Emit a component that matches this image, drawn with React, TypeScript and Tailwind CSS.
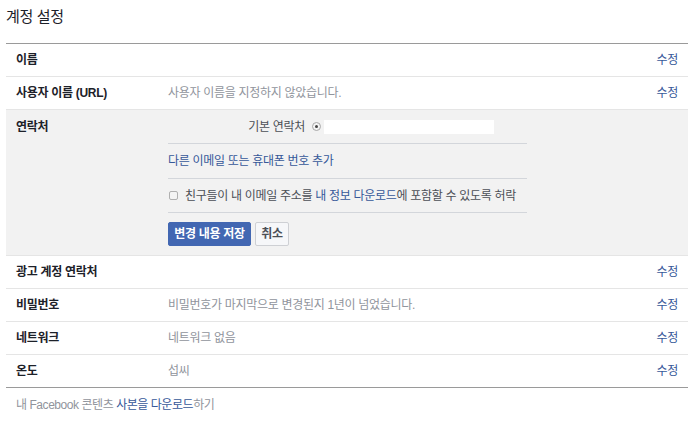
const font = "font-['Liberation_Sans','Noto_Sans_CJK_KR',sans-serif]";

type Row = { label: string; value?: string };

function SettingRow({ label, value }: Row) {
  return (
    <div className="flex h-[33px] items-center border-b border-[#e5e5e5] pl-[10px] pr-[10px]">
      <div className="w-[152px] font-bold text-[#1d2129]">{label}</div>
      <div className="flex-1 text-[#90949c]">{value}</div>
      <a className="text-[#365899]">수정</a>
    </div>
  );
}

function ContactEditor() {
  return (
    <div className="flex border-b border-[#e5e5e5] bg-[#f2f2f2] pl-[10px]">
      <div className="flex h-[34px] w-[152px] items-center font-bold text-[#1d2129]">연락처</div>
      <div className="w-[359px]">
        <div className="flex h-[34px] items-center border-b border-[#d3d6db]">
          <span className="w-[137px] text-right text-[#4b4f56]">기본 연락처</span>
          <span className="ml-[7px] flex h-[9px] w-[9px] items-center justify-center rounded-full border border-[#a8a8a8] bg-[#f4f4f4]">
            <span className="h-[3px] w-[3px] rounded-full bg-[#444]" />
          </span>
          <span className="ml-[3px] h-[14px] w-[170px] bg-white" />
        </div>
        <div className="flex h-[35px] items-center border-b border-[#d3d6db]">
          <a className="text-[#365899]">다른 이메일 또는 휴대폰 번호 추가</a>
        </div>
        <div className="flex h-[34px] items-center border-b border-[#d3d6db]">
          <span className="ml-[1px] h-[9px] w-[9px] rounded-[2px] border border-[#b0b0b0] bg-[#f4f4f4]" />
          <span className="ml-[7px] text-[#4b4f56]">
            친구들이 내 이메일 주소를 <a className="text-[#365899]">내 정보 다운로드</a>에 포함할 수 있도록 허락
          </span>
        </div>
        <div className="flex gap-[4px] pb-[9px] pt-[9px]">
          <button className="h-[24px] w-[83px] rounded-[2px] border border-[#4267b2] bg-[#4267b2] font-bold text-white">
            변경 내용 저장
          </button>
          <button className="h-[24px] w-[34px] rounded-[2px] border border-[#ced0d4] bg-[#f6f7f9] font-bold text-[#4b4f56]">
            취소
          </button>
        </div>
      </div>
    </div>
  );
}

export default function App() {
  return (
    <div className={`${font} h-[424px] w-[700px] bg-white px-[6px] text-[12px] tracking-[-0.3px]`}>
      <h1 className="h-[43px] pt-[7px] text-[15px] leading-[20px] text-[#1d2129]">계정 설정</h1>
      <div className="w-[682px] border-t border-[#9a9a9a]">
        <SettingRow label="이름" />
        <SettingRow label="사용자 이름 (URL)" value="사용자 이름을 지정하지 않았습니다." />
        <ContactEditor />
        <SettingRow label="광고 계정 연락처" />
        <SettingRow label="비밀번호" value="비밀번호가 마지막으로 변경된지 1년이 넘었습니다." />
        <SettingRow label="네트워크" value="네트워크 없음" />
        <div className="flex h-[33px] items-center border-b border-[#9a9a9a] pl-[10px] pr-[10px]">
          <div className="w-[152px] font-bold text-[#1d2129]">온도</div>
          <div className="flex-1 text-[#90949c]">섭씨</div>
          <a className="text-[#365899]">수정</a>
        </div>
        <div className="pl-[10px] pt-[8px] tracking-[-0.45px] text-[#90949c]">
          내 Facebook 콘텐츠 <a className="text-[#365899]">사본을 다운로드</a>하기
        </div>
      </div>
    </div>
  );
}
